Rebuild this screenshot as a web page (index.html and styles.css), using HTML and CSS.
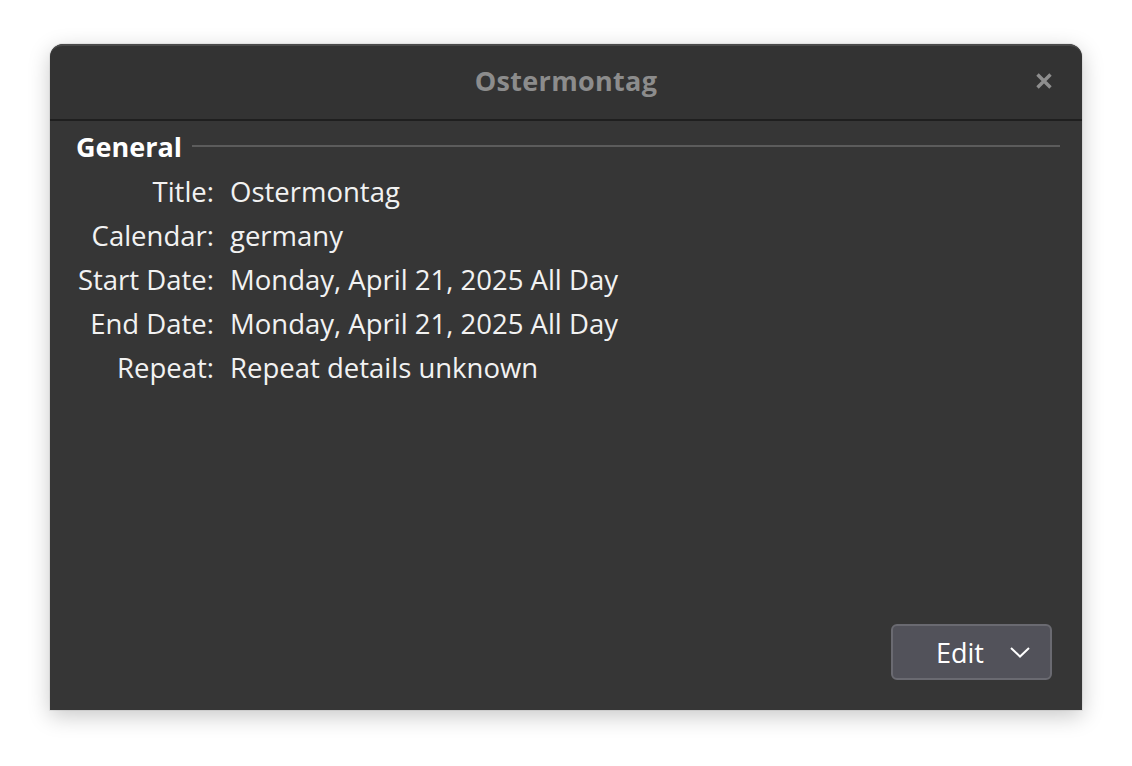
FILE: index.html
```html
<!DOCTYPE html>
<html>
<head>
<meta charset="utf-8">
<link rel="stylesheet" href="styles.css">
</head>
<body>
<div class="window">
  <header class="headerbar">
    <div class="title">Ostermontag</div>
    <button class="close" aria-label="Close">
      <svg width="18" height="18" viewBox="0 0 18 18"><path d="M2.5 2.5 L15.5 15.5 M15.5 2.5 L2.5 15.5" stroke="#8e8e8e" stroke-width="3.4" stroke-linecap="butt"/></svg>
    </button>
  </header>
  <main class="content">
    <div class="section-head">
      <span class="section-title">General</span>
      <span class="section-line"></span>
    </div>
    <div class="fields">
      <div class="label">Title:</div><div class="value">Ostermontag</div>
      <div class="label">Calendar:</div><div class="value">germany</div>
      <div class="label">Start Date:</div><div class="value">Monday, April 21, 2025 All Day</div>
      <div class="label">End Date:</div><div class="value">Monday, April 21, 2025 All Day</div>
      <div class="label">Repeat:</div><div class="value">Repeat details unknown</div>
    </div>
    <div class="actions">
      <button class="edit">
        <span>Edit</span>
        <svg width="22" height="14" viewBox="0 0 22 14"><path d="M2 3 L11 11.5 L20 3" fill="none" stroke="#ffffff" stroke-width="2"/></svg>
      </button>
    </div>
  </main>
</div>
</body>
</html>
```

FILE: styles.css
```css
html, body {
  margin: 0;
  padding: 0;
  background: #ffffff;
}
body {
  width: 1132px;
  height: 766px;
  overflow: hidden;
  font-family: "Open Sans", "Noto Sans", sans-serif;
  padding: 44px 50px 0 50px;
  box-sizing: border-box;
}
.window {
  width: 1032px;
  height: 666px;
  border-radius: 13px 13px 0 0;
  background: #363636;
  box-shadow: 0 6px 22px rgba(0,0,0,0.22), 0 0 0 1px rgba(0,0,0,0.06);
  display: flex;
  flex-direction: column;
  overflow: hidden;
}
.headerbar {
  height: 73px;
  background: #333333;
  border-top: 2px solid #4a4a4a;
  border-bottom: 2px solid #1f1f1f;
  border-radius: 13px 13px 0 0;
  display: flex;
  align-items: center;
  justify-content: center;
  position: relative;
}
.title {
  color: #8c8c8c;
  font-weight: 700;
  font-size: 27px;
  letter-spacing: 0.3px;
  margin-top: -4px;
}
.close {
  position: absolute;
  right: 29px;
  top: 26px;
  width: 18px;
  height: 18px;
  padding: 0;
  border: none;
  background: none;
  display: flex;
}
.content {
  flex: 1;
  display: flex;
  flex-direction: column;
  padding: 8px 22px 30px 26px;
}
.section-head {
  display: flex;
  align-items: center;
  gap: 10px;
  height: 34px;
}
.section-title {
  color: #ffffff;
  font-weight: 700;
  font-size: 27px;
}
.section-line {
  flex: 1;
  height: 2px;
  background: #5c5c5c;
}
.fields {
  display: grid;
  grid-template-columns: 138px auto;
  column-gap: 16px;
  grid-auto-rows: 44px;
  align-items: center;
  margin-top: 6px;
  font-size: 27.5px;
  color: #f2f2f2;
}
.label {
  text-align: right;
  justify-self: end;
  width: 200px;
  margin-left: -62px;
  white-space: nowrap;
}
.value {
  white-space: nowrap;
}
.actions {
  margin-top: auto;
  display: flex;
  justify-content: flex-end;
  padding-right: 8px;
}
.edit {
  width: 161px;
  height: 56px;
  box-sizing: border-box;
  background: #52525a;
  border: 2px solid #6a6a71;
  border-radius: 6px;
  display: flex;
  align-items: center;
  justify-content: flex-end;
  gap: 25px;
  padding: 0 19px 0 0;
  color: #ffffff;
  font-family: "Open Sans", "Noto Sans", sans-serif;
  font-size: 27px;
}
```
